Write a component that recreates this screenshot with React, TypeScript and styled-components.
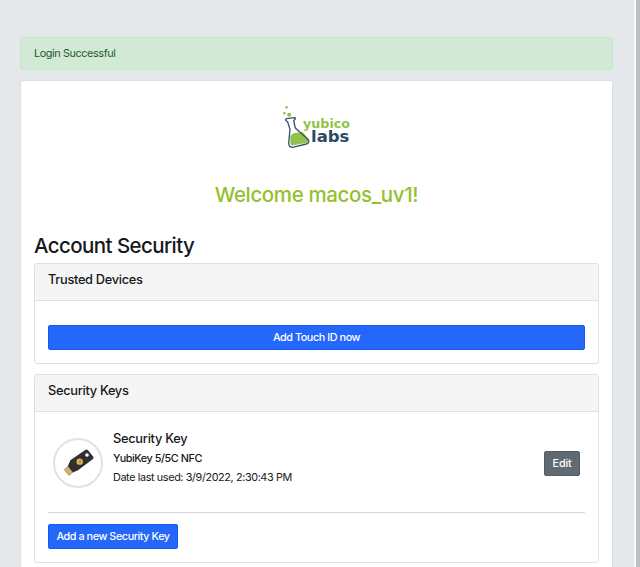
import React from "react";
import styled, { createGlobalStyle } from "styled-components";

const GlobalStyle = createGlobalStyle`
  * { box-sizing: border-box; }
  body {
    margin: 0;
    background: #e4e8eb;
    font-family: Inter, "Liberation Sans", sans-serif;
    color: #16181b;
    overflow: hidden;
  }
`;

const Page = styled.div`
  display: flex;
  height: 567px;
  overflow: hidden;
`;

const Content = styled.main`
  flex: 1;
  padding: 37px 21px 0 20px;
`;

const ScrollEdge = styled.div`
  width: 6px;
  background: #bfbfbf;
  border-left: 2px solid #fafafa;
`;

const Alert = styled.div`
  height: 33px;
  padding: 0 13px;
  border: 1px solid #c3e6cb;
  border-radius: 3px;
  background: #d2e9d6;
  color: #1c5a2a;
  font-size: 10.8px;
  line-height: 31px;
  letter-spacing: -0.38px;
`;

const Panel = styled.section`
  height: 520px;
  margin-top: 10px;
  padding: 24px 13px 0;
  border: 1px solid #dcdfe2;
  border-radius: 3px;
  background: #fff;
`;

const Logo = styled.svg`
  display: block;
  width: 70px;
  height: 45px;
  margin-left: 249px;
`;

const Welcome = styled.h2`
  margin: 32px 0 0;
  color: #94c12d;
  font-size: 20.5px;
  font-weight: 500;
  line-height: 26px;
  letter-spacing: -0.37px;
  text-align: center;
`;

const Heading = styled.h3`
  margin: 25px 0 0;
  font-size: 20.5px;
  font-weight: 500;
  line-height: 26px;
  letter-spacing: -0.58px;
`;

const Card = styled.div<{ $height: number; $gap: number }>`
  height: ${(p) => p.$height}px;
  margin-top: ${(p) => p.$gap}px;
  border: 1px solid #e0e0e0;
  border-radius: 3px;
  overflow: hidden;
`;

const CardHeader = styled.div<{ $height: number }>`
  height: ${(p) => p.$height}px;
  padding: 7px 13px 0;
  border-bottom: 1px solid #e0e0e0;
  background: #f5f5f5;
  font-size: 12.8px;
  font-weight: 500;
  line-height: 18px;
  letter-spacing: -0.3px;
`;

const CardBody = styled.div<{ $top: number }>`
  padding: ${(p) => p.$top}px 13px 0;
`;

const Button = styled.button<{ $tone?: "primary" | "secondary"; $width: string; $spacing?: number }>`
  display: block;
  width: ${(p) => p.$width};
  height: 25px;
  padding: 0;
  border: 1px solid ${(p) => (p.$tone === "secondary" ? "#515c66" : "#105af5")};
  border-radius: 2px;
  background: ${(p) => (p.$tone === "secondary" ? "#616971" : "#2567fa")};
  color: #fff;
  font-family: inherit;
  font-size: 10.8px;
  font-weight: 500;
  line-height: 23px;
  letter-spacing: ${(p) => p.$spacing ?? -0.43}px;
  white-space: nowrap;
`;

const KeyRow = styled.div`
  display: grid;
  grid-template-columns: 49px 1fr 36px;
  align-items: start;
  height: 84px;
  padding: 0 5px;
`;

const KeyBadge = styled.div`
  display: flex;
  width: 50px;
  height: 50px;
  margin-top: 10px;
  border: 2px solid #e2e2e2;
  border-radius: 50%;
`;

const KeyInfo = styled.div`
  padding: 1px 0 0 11px;
`;

const KeyName = styled.div`
  font-size: 12.8px;
  font-weight: 500;
  line-height: 20px;
  letter-spacing: -0.27px;
`;

const KeyModel = styled.div`
  font-size: 10.8px;
  font-weight: 500;
  line-height: 19px;
  letter-spacing: -0.43px;
`;

const KeyDate = styled.div`
  font-size: 10.8px;
  line-height: 20px;
  letter-spacing: -0.37px;
`;

const KeyAction = styled.div`
  padding-top: 23px;
`;

const Divider = styled.hr`
  height: 1px;
  margin: 0 0 11px;
  border: 0;
  background: #d8d8d8;
`;

function YubicoLabsLogo() {
  return (
    <Logo viewBox="39 30 210 135" role="img" aria-label="yubico labs">
      <g fill="#94c14a">
        <circle cx="49.5" cy="36.5" r="3.8" />
        <circle cx="43" cy="55" r="3.8" />
        <circle cx="57.5" cy="59" r="6" />
        <path d="M61 123 Q69 112 80 113 Q88 114 97 110 L114 130 Q119 137 111 143 L71 151 Q61 153 61 144Z" />
      </g>
      <path
        d="M47 76 Q45 72 51 71 L73 68 Q78 69 75 73 L71 77 L76 99 L115 134 Q120 143 109 147 L68 157 Q56 157 56 145 L60 103 L53 81 Z"
        fill="none"
        stroke="#3a566b"
        strokeWidth="4"
        strokeLinejoin="round"
      />
      <text x="99" y="99" textLength="141" lengthAdjust="spacingAndGlyphs" fill="#94c14a" fontFamily="DejaVu Sans, sans-serif" fontWeight="700" fontSize="36">yubico</text>
      <text x="123" y="141" textLength="115" lengthAdjust="spacingAndGlyphs" fill="#294b61" fontFamily="DejaVu Sans, sans-serif" fontWeight="700" fontSize="45">labs</text>
    </Logo>
  );
}

function YubiKeyDrawing() {
  return (
    <svg width="46" height="46" viewBox="29 32 138 138" aria-hidden="true">
      <path d="M57 121 L70 109 L85 127 L71 138Z" fill="#d3b46a" stroke="#8f7440" strokeWidth="2" />
      <path d="M69 106 L75 93 L121 61 Q125 59 128 63 L144 82 Q146 87 142 90 L98 123 L84 129 Q81 128 79 125 L68 111Z" fill="#303030" />
      <circle cx="103" cy="97" r="9.5" fill="#e5bc51" />
      <path d="M98 99 L103 94 L108 94 M102 100 L107 98" fill="none" stroke="#655329" strokeWidth="2" />
      <circle cx="125" cy="77" r="5.5" fill="#fff" />
    </svg>
  );
}

export default function App() {
  return (
    <>
      <GlobalStyle />
      <Page>
        <Content>
          <Alert role="alert">Login Successful</Alert>
          <Panel>
            <YubicoLabsLogo />
            <Welcome>Welcome macos_uv1!</Welcome>
            <Heading>Account Security</Heading>
            <Card $height={101} $gap={4}>
              <CardHeader $height={37}>Trusted Devices</CardHeader>
              <CardBody $top={24}>
                <Button $width="100%">Add Touch ID now</Button>
              </CardBody>
            </Card>
            <Card $height={189} $gap={10}>
              <CardHeader $height={37}>Security Keys</CardHeader>
              <CardBody $top={16}>
                <KeyRow>
                  <KeyBadge>
                    <YubiKeyDrawing />
                  </KeyBadge>
                  <KeyInfo>
                    <KeyName>Security Key</KeyName>
                    <KeyModel>YubiKey 5/5C NFC</KeyModel>
                    <KeyDate>Date last used: 3/9/2022, 2:30:43 PM</KeyDate>
                  </KeyInfo>
                  <KeyAction>
                    <Button $tone="secondary" $width="36px" $spacing={-0.2}>Edit</Button>
                  </KeyAction>
                </KeyRow>
                <Divider />
                <Button $width="130px">Add a new Security Key</Button>
              </CardBody>
            </Card>
          </Panel>
        </Content>
        <ScrollEdge />
      </Page>
    </>
  );
}
